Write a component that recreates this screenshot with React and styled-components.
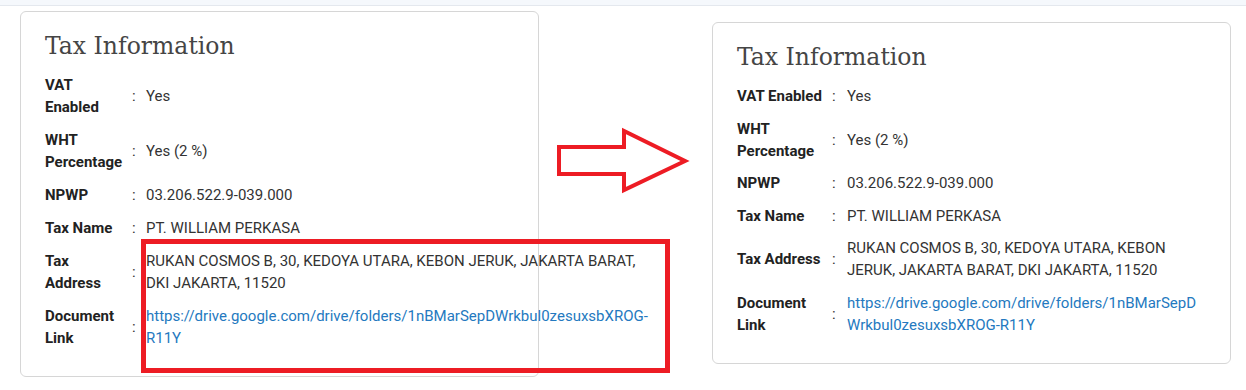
import React from "react";
import styled, { createGlobalStyle } from "styled-components";

const GlobalStyle = createGlobalStyle`
  html, body { margin: 0; padding: 0; background: #ffffff; }
  body { font-family: Roboto, "Liberation Sans", Arial, sans-serif; }
  * { box-sizing: border-box; }
`;

const Band = styled.div`
  height: 6px;
  background: #f5f8fc;
  border-bottom: 1px solid #e4e8ee;
`;

const Stage = styled.div`
  display: flex;
  align-items: flex-start;
  padding: 5px 0 0 20px;
  width: 1246px;
`;

const Card = styled.section`
  position: relative;
  flex: none;
  width: 519px;
  margin-top: ${(p) => p.$offset || 0}px;
  padding: 20px 25px 27px 24px;
  border: 1px solid #d6d6d6;
  border-radius: 6px;
  background: #fff;
`;

const Title = styled.h2`
  margin: 0 0 14px;
  font-family: "DejaVu Serif", "Liberation Serif", serif;
  font-weight: 400;
  font-size: 23.5px;
  line-height: 28px;
  color: #454545;
`;

const Rows = styled.div`
  display: flex;
  flex-direction: column;
  gap: ${(p) => p.$gap}px;
`;

const Row = styled.div`
  display: grid;
  grid-template-columns: ${(p) => p.$cols};
  align-items: center;
  font-size: 15px;
  line-height: 22px;
`;

const Label = styled.div`
  font-weight: 700;
  color: #222;
  white-space: pre-line;
`;

const Colon = styled.div`
  padding-left: 2px;
  color: #333;
`;

const Value = styled.div`
  color: #333;
  word-break: ${(p) => (p.$breakAll ? "break-all" : "normal")};
`;

const Link = styled.a`
  color: #2479c0;
  text-decoration: none;
`;

const Highlight = styled.div`
  position: absolute;
  left: 120px;
  top: 227px;
  width: 529px;
  height: 134px;
  border: 5px solid #ed1c24;
  pointer-events: none;
`;

const ArrowBox = styled.div`
  flex: none;
  width: 173px;
  height: 200px;
`;

const url =
  "https://drive.google.com/drive/folders/1nBMarSepDWrkbul0zesuxsbXROG-R11Y";

const before = [
  ["VAT\nEnabled", "Yes"],
  ["WHT\nPercentage", "Yes (2 %)"],
  ["NPWP", "03.206.522.9-039.000"],
  ["Tax Name", "PT. WILLIAM PERKASA"],
  ["Tax\nAddress", "RUKAN COSMOS B, 30, KEDOYA UTARA, KEBON JERUK, JAKARTA BARAT, DKI JAKARTA, 11520"],
  ["Document\nLink", url, true],
];

const after = [
  ["VAT Enabled", "Yes"],
  ["WHT Percentage", "Yes (2 %)"],
  ["NPWP", "03.206.522.9-039.000"],
  ["Tax Name", "PT. WILLIAM PERKASA"],
  ["Tax Address", "RUKAN COSMOS B, 30, KEDOYA UTARA, KEBON JERUK, JAKARTA BARAT, DKI JAKARTA, 11520"],
  ["Document Link", url, true],
];

function TaxCard({ rows, cols, offset, gap, breakLinks, children }) {
  return (
    <Card $offset={offset}>
      <Title>Tax Information</Title>
      <Rows $gap={gap}>
        {rows.map(([label, value, isLink]) => (
          <Row key={label} $cols={cols}>
            <Label>{label}</Label>
            <Colon>:</Colon>
            <Value $breakAll={isLink && breakLinks}>
              {isLink ? <Link href="#">{value}</Link> : value}
            </Value>
          </Row>
        ))}
      </Rows>
      {children}
    </Card>
  );
}

function Arrow() {
  return (
    <ArrowBox>
      <svg width="173" height="200" viewBox="0 0 173 200">
        <polygon
          points="20,136 85,136 85,120 146,150 85,179 85,163 20,163"
          fill="none"
          stroke="#ed1c24"
          strokeWidth="4"
          strokeLinejoin="miter"
        />
      </svg>
    </ArrowBox>
  );
}

export default function App() {
  return (
    <>
      <GlobalStyle />
      <Band />
      <Stage>
        <TaxCard rows={before} cols="85px 16px 508px" gap={11}>
          <Highlight />
        </TaxCard>
        <Arrow />
        <TaxCard
          rows={after}
          cols="93px 17px 355px"
          offset={11}
          gap={10.5}
          breakLinks
        />
      </Stage>
    </>
  );
}
